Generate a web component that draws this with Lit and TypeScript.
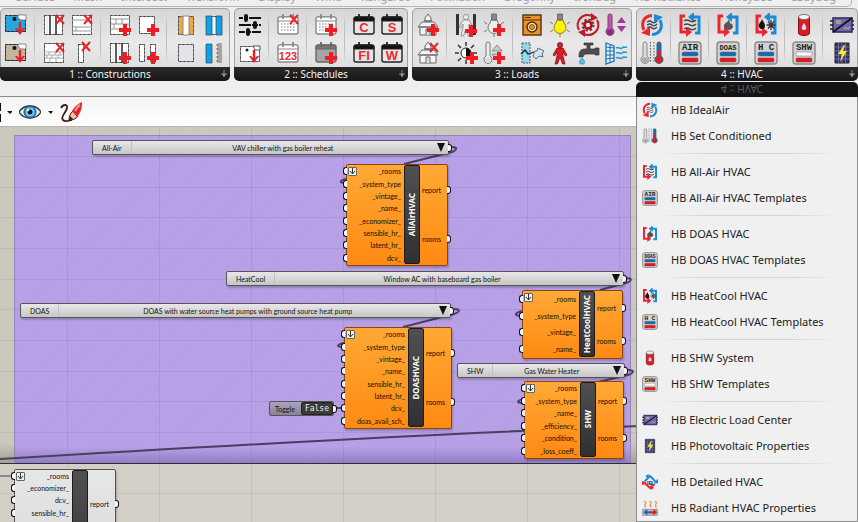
import { LitElement, html, svg, css } from "lit";
import { customElement, property } from "lit/decorators.js";
import { styleMap } from "lit/directives/style-map.js";

/* ---------- shared icon fragments (24 x 24 grid) ---------- */

const plus = (x = 17, y = 17) => svg`<path d="M${x - 6} ${y}h12M${x} ${y - 6}v12" stroke="#ee1c24" stroke-width="4" fill="none"/>`;
const cross = (x = 18, y = 6) => svg`<path d="M${x - 4} ${y - 4}l8 9M${x + 4} ${y - 4}l-8 9" stroke="#e8222b" stroke-width="2" fill="none"/>`;
const downArrow = (x = 16) => svg`<path d="M${x} 9v10" stroke="#ee1c24" stroke-width="2.400"/><path d="M${x - 5} 15h2l3 3 3-3h2l-5 7z" fill="#ee1c24"/>`;
const dashed = (x: number, y: number, w: number, h: number, fill = "#fff") =>
  svg`<rect x=${x + 0.5} y=${y + 0.5} width=${w - 1} height=${h - 1} fill=${fill} stroke="#8a8a8a"/><rect x=${x + 0.5} y=${y + 0.5} width=${w - 1} height=${h - 1} stroke="#444" stroke-dasharray="2 2"/>`;

const tag = (fill: string, top: number) => svg`
  <path d="M1.500 ${top + 0.5}h20v16h-20z" fill=${fill} stroke="#555"/>
  <path d="M1.500 ${top + 0.5}h20v16h-20z" stroke="#222" stroke-dasharray="2 2"/>
  <path d="M14 ${top}h8v5h-5l-3-2z" fill="#fff" stroke="#444" stroke-width=".6"/>
  <circle cx="10.500" cy=${top + 4} r="2" fill="#111"/>${downArrow()}`;

const layers = svg`${dashed(2, 2, 19, 20)}
  <path d="M8 2v20M14 2v20" stroke="#333" stroke-width="1.600"/><path d="M5 3v18M11 3v18" stroke="#ccc" stroke-width=".6"/>`;
const bricksTop = svg`${dashed(2, 2, 20, 20)}<path d="M2 6h20M2 11h20M8 6v5M6 11v4M2 16h9M14 6v5" stroke="#777" fill="none" stroke-width=".8"/>`;
const bricksLow = svg`${dashed(2, 2, 20, 20)}<path d="M2 11h20M2 14h20M2 17h20M7 11v3M13 11v3M18 11v3M5 14v3M10 14v3M16 14v3M8 17v4M14 17v4" stroke="#999" stroke-width=".8"/>`;

const calendar = (fill = "#fff", head = "#fff", line = "#888") => svg`
  <rect x="2" y="4" width="20" height="17" rx="2" fill=${fill} stroke=${line} stroke-width="1.400"/>
  <path d="M2 6a2 2 0 012-2h16a2 2 0 012 2v2H2z" fill=${head} stroke=${line}/>
  <path d="M7 1v5M17 1v5" stroke=${line} stroke-width="1.800"/>`;
const days = svg`<path d="M5 11h14M5 14h14M5 17h14" stroke="#aaa" stroke-width="1.400" stroke-dasharray="1.600 1.400"/>`;
const letterDay = (t: string) => svg`${calendar("#e6e6e6", "#111", "#222")}
  <text x="12" y="19" text-anchor="middle" font-family="Liberation Sans, sans-serif" font-weight="700" font-size="13" fill="#ee2a2a">${t}</text>`;

const house = svg`<path d="M9 5l3-4 3 4v3H9zM2 14l4-5h12l4 5zM4 14h16v8H4z" fill="#f4f4f4" stroke="#666"/><path d="M10 22v-6h4v6M8 8h8" fill="#ddd" stroke="#666"/>`;
const bulb = (fill: string, line: string) => svg`
  <path d="M9 7h6l1 3a6 6 0 11-8 0z" fill=${fill} stroke=${line}/>
  <path d="M9.500 1h5v6h-5z" fill="#888" stroke="#444" stroke-width=".6"/><path d="M2 9l3 2M22 9l-3 2M2 19l3-2M22 19l-3-2M12 21v3" stroke=${line}/>`;
const person = (fill: string, line: string) => svg`<circle cx="12" cy="4" r="2.600" fill=${fill} stroke=${line} stroke-width=".7"/>
  <path d="M9 7h6l4 7-1.500 1L15 11v4l2 8h-2.500L12 16l-2.500 7H7l2-8v-4l-2.500 4L5 14z" fill=${fill} stroke=${line} stroke-width=".7"/>`;
const thermo = (x: number, fill: string, bulbFill: string, line: string) => svg`
  <path d="M${x - 2} 3a2 2 0 014 0v12a4 4 0 11-4 0z" fill=${fill} stroke=${line}/>
  <circle cx=${x} cy="19" r="3" fill=${bulbFill}/>`;

const waves = svg`<path d="M6 8c3-2 4-1 6 0s4 1 6-1M6 12c3-2 4-1 6 0s4 1 6-1M6 16c3-2 4-1 6 0s4 1 6-1" stroke="#444" stroke-width="1.500" fill="none"/>`;
const loop = svg`
  <path d="M7 3H3v16h7" stroke="#ee2431" stroke-width="3" fill="none"/><path d="M8 14l6 5-6 5z" fill="#ee2431"/>
  <path d="M17 20h4V4h-7" stroke="#1c8ad6" stroke-width="3" fill="none"/><path d="M16 -1l-6 5 6 5z" fill="#1c8ad6"/>`;
const template = (t: string, upper = "#0f6db8", size = 7) => svg`
  <rect x="1" y="1" width="22" height="22" rx="3" fill="#d2d2d2" stroke="#8a8a8a" stroke-width="1.400"/>
  <text x="12" y="9" text-anchor="middle" font-family="Liberation Mono, monospace" font-weight="700" font-size=${size} fill="#222">${t}</text>
  <rect x="4" y="11" width="16" height="4" rx="1.500" fill=${upper} stroke="#666" stroke-width=".5"/>
  <rect x="4" y="17" width="16" height="4" rx="1" fill="#e01b24" stroke="#933" stroke-width=".5"/>`;
const cell = svg`<path d="M5 2h14v20H5z" fill="#33346e" stroke="#222"/><path d="M8.500 2v20M12 2v20M15.500 2v20M5 6h14M5 10h14M5 14h14M5 18h14" stroke="#8585b8" stroke-width=".7"/>`;

const icons: Record<string, unknown> = {
  matOpaque: tag("#2aa5e0", 2),
  matTan: tag("#c4b49c", 3),
  layersCut: svg`${layers}${cross()}`,
  bricksCut: svg`${bricksLow}${cross()}`,
  frameCut: svg`${dashed(2, 2, 20, 20)}<path d="M2 7h20M2 14h20M2 18h20M6 14v4" stroke="#999"/>${cross()}`,
  barCut: svg`${dashed(8, 3, 6, 19)}${cross(16, 5)}`,
  bricksAdd: svg`${bricksTop}${plus()}`,
  layersAdd: svg`${layers}${plus()}`,
  boxAdd: svg`${dashed(3, 3, 16, 18)}${plus()}`,
  gapAdd: svg`${dashed(3, 3, 6, 18)}${dashed(14, 3, 6, 18)}${plus()}`,
  opaque: svg`${dashed(4, 3, 16, 19, "#f2a73c")}<path d="M9 3h6v19H9z" fill="#fff" stroke="#888"/>`,
  blank: dashed(4, 3, 16, 18, "#e2e4e7"),
  glass: svg`${dashed(4, 3, 16, 19, "#eef7fc")}<path d="M4 3h6v19H4zM14 3h6v19h-6z" fill="#0ea1e4" stroke="#345" stroke-width=".7"/>`,
  shade: svg`<path d="M4 3h6v19H4z" fill="#0ea1e4" stroke="#345" stroke-width=".7"/><path d="M20 3h-4q-2 1 0 2h4M20 7h-4q-2 1 0 2h4M20 11h-4q-2 1 0 2h4M20 15h-4q-2 1 0 2h4M20 19h-4q-2 1 0 2h4" fill="none" stroke="#666" stroke-width="1.200"/>`,
  sliders: svg`<path d="M1 5h22M1 12h22M1 19h22" stroke="#111" stroke-width="2.200"/><path d="M8 3v4M17 10v4M10 17v4" stroke="#111" stroke-width="4" stroke-linecap="round"/><path d="M5 5h1M10 5h1M13 12h1M20 12h1M7 19h1M13 19h1" stroke="#ddd" stroke-width="2.200"/>`,
  pickSchedule: svg`${dashed(2, 5, 20, 16)}<circle cx="9" cy="9" r="1.500" fill="#222"/><path d="M15 5h7v4h-5z" fill="#fff" stroke="#555"/>${downArrow()}`,
  calCut: svg`${calendar()}${days}${cross()}`,
  cal123: svg`${calendar()}<text x="12" y="19" text-anchor="middle" font-family="Liberation Sans, sans-serif" font-weight="700" font-size="11" fill="#ee2a2a">123</text>`,
  calAdd: svg`${calendar()}${days}${plus()}`,
  calGray: svg`${calendar("#a4a4a4", "#777", "#666")}${days}${plus()}`,
  calC: letterDay("C"), calS: letterDay("S"), calFI: letterDay("FI"), calW: letterDay("W"),
  houseAdd: svg`${house}${plus()}`,
  houseCut: svg`${house}${cross()}`,
  occupancy: svg`<path d="M3.500 1v21M20.500 1v21" stroke="#333" stroke-width="3"/>${person("#eee", "#777")}${plus(17, 18)}`,
  bulbAdd: svg`${bulb("#eee", "#777")}${plus()}`,
  sunAdd: svg`<path d="M12 1v4M12 19v4M1 12h4M19 12h4M4 4l3 3M20 4l-3 3M4 20l3-3" stroke="#333" stroke-width="1.500"/><circle cx="12" cy="12" r="5" fill="#fff" stroke="#222"/><path d="M12 7a5 5 0 010 10z" fill="#111"/>${plus(18, 17)}`,
  thermoAdd: svg`${thermo(6, "#eee", "#ddd", "#777")}<path d="M10 10l5-6 5 6zM10 13h9l-5 6z" fill="#ccc" stroke="#888"/>${plus()}`,
  washer: svg`<rect x="3" y="2" width="18" height="20" fill="#f5921e" stroke="#4a3216" stroke-width="1.400"/><path d="M3 7h18M5 4.500h6" stroke="#4a3216"/><circle cx="12" cy="14" r="5" fill="#fbd9a8" stroke="#4a3216" stroke-width="1.500"/><circle cx="12" cy="14" r="2.500" fill="#f5921e" stroke="#4a3216" stroke-width=".7"/>`,
  bulbOn: bulb("#fff200", "#8c8418"),
  gear: svg`<path d="M3 17A10 10 0 0116 3M21 7A10 10 0 018 21" stroke="#bb1e2a" stroke-width="2.200"/><path d="M15 0l7 5-7 3zM9 24l-7-5 7-3z" fill="#bb1e2a"/><circle cx="12" cy="12" r="3.500" fill="#e6e6e6" stroke="#a31621" stroke-width="2.600"/><circle cx="12" cy="12" r="5.500" stroke="#a31621" stroke-width="2" stroke-dasharray="2.200 2.119"/>`,
  setpoint: svg`${thermo(6, "#c055b4", "#8e2a86", "#7a3a75")}<path d="M13 10l4.500-6L22 10zM13 13h9l-4.500 6z" fill="#a3369b"/>`,
  infiltration: svg`<rect x="2" y="2" width="8" height="20" fill="#93d8f2" stroke="#555" stroke-dasharray="2 1"/><path d="M1 13l4-4 3 4 6-2" fill="none" stroke="#222" stroke-width="1.300"/><path d="M13 15l2-5 2 0 1-3 6 3-2 3 1 3-4-1-3 3z" fill="#cbe9f5" stroke="#667"/>`,
  people: person("#e01b24", "#6d0c10"),
  faucet: svg`<path d="M8 2h9v2h-3v4h5v-1h4v7h-4v-1h-8c-3 0-3 1-4 3H3c0-5 1-8 6-8h2V4H8z" fill="#4d4d4d" stroke="#333" stroke-width=".7"/><path d="M6 17c3 3 3 4 2 6H4c-1-2-1-3 2-6z" fill="#58bdea" stroke="#2c7fa8" stroke-width=".6"/>`,
  ventilation: svg`<path d="M2 2l8 3v15l-8 3z" fill="#dff3fc" stroke="#1d6fae" stroke-width="1.300"/><path d="M2 6l8 1M2 10h8M2 14h8M2 18l8-1M6 4v18" stroke="#1d6fae"/><path d="M12 7c3-2 4 2 6 0s3 0 5-1M12 12c3-2 4 2 6 0s3 0 5-1M12 17c3-2 4 2 6 0s3 0 5-1" stroke="#259bd8" stroke-width="1.600" fill="none"/>`,
  ideal: svg`<path d="M7 9c3-2 4-1 5 0s3 1 5-1M7 12c3-2 4-1 5 0s3 1 5-1M7 15c3-2 4-1 5 0s3 1 5-1" stroke="#444" stroke-width="1.300"/><path d="M12 2.500C3 3 1 11 4 17" stroke="#ee2431" stroke-width="3" fill="none"/><path d="M1 20l9 3V14z" fill="#ee2431"/><path d="M12 21.500c9-.5 11-8.500 8-14.500" stroke="#1c8ad6" stroke-width="3" fill="none"/><path d="M23 4l-9-3v9z" fill="#1c8ad6"/>`,
  conditioned: svg`${thermo(5, "#ddd", "#aaa", "#888")}<path d="M10.500 1v21M14 1v21" stroke="#555" stroke-dasharray="1.500 1.500"/>${thermo(19, "#1c6fc0", "#e01b24", "#555")}<path d="M17.500 10h3v7h-3z" fill="#e01b24"/>`,
  allAir: svg`${loop}${waves}`,
  doas: svg`${loop}<path d="M13 6c-1 4-6 4-5 8 1 4 8 4 9 0 0-2-1-2-1-4-1 2-2 1-3-4z" fill="#555"/>`,
  heatCool: svg`${loop}<path d="M8 6c-1 4-4 4-3 8 1 3 6 3 6-1 0-3-2-4-3-7z" fill="#111"/><path d="M17 7v10M12.500 12h9M14 8.500l6 7M20 8.500l-6 7" stroke="#333" stroke-width="1.300"/>`,
  tAir: template("AIR", undefined, 9), tDoas: template("DOAS"), tHc: template("H C", undefined, 9), tShw: template("SHW", "#fff", 9),
  shw: svg`<path d="M6.500 4v16a5.500 2.500 0 0011 0V4z" fill="#e01b24" stroke="#7c1116"/><ellipse cx="12" cy="4" rx="5.500" ry="2.500" fill="#f4f4f4" stroke="#777"/><path d="M12 10c3 4 3 7 0 7s-3-3 0-7z" fill="#bfe6fa"/>`,
  electric: svg`<rect x="3" y="5" width="19" height="14" fill="#6e68b4" stroke="#33315c" stroke-width="1.600"/><path d="M3 19L22 5" stroke="#111" stroke-width="1.600"/><path d="M0 8h3M0 12h3M0 16h3M22 8h2M22 12h2M22 16h2" stroke="#222" stroke-width="1.600"/><path d="M6 8h5M6 10h5M14 16c2-4 3 2 6-2" stroke="#ddd05a" fill="none"/>`,
  solar: svg`${cell}<path d="M14 4l-6 9h4l-2 8 7-11h-4l2-6z" fill="#ffe92e"/>`,
  detailed: svg`<path d="M4 11l8-8 8 8" fill="none" stroke="#1c8ad6" stroke-width="3"/><path d="M24 7v7h-7zM10 0l-5 3 5 5z" fill="#1c8ad6"/><path d="M4 14l8 7 7-6" fill="none" stroke="#ee2431" stroke-width="3"/><path d="M0 17v-7l7 3zM13 24l5-3-5-5z" fill="#ee2431"/><text x="12" y="16" text-anchor="middle" font-family="Liberation Sans, sans-serif" font-weight="700" font-size="9" fill="#222">IB</text>`,
  radiant: svg`<path d="M3 2q4 1 2 4t1 5M11 2q4 1 2 4t1 5M19 2q4 1 2 4t1 5" stroke="#f08a4a" stroke-width="1.800" fill="none"/><path d="M1 14h22v9H1z" fill="#bbb" stroke="#777"/><path d="M7 18.500h6" stroke="#1668b8" stroke-width="3"/><path d="M8 14v9l-6-4.500z" fill="#1668b8"/><path d="M12 18.500h6" stroke="#e01b24" stroke-width="3"/><path d="M17 14v9l6-4.500z" fill="#e01b24"/>`,
};

@customElement("gh-icon")
class GhIcon extends LitElement {
  @property() name = "";
  static styles = css`
    :host { display: block; width: 24px; height: 24px; }
    svg { display: block; width: 100%; height: 100%; }
  `;
  render() { return html`<svg viewBox="0 0 24 24" fill="none" aria-hidden="true">${icons[this.name]}</svg>`; }
}

/* ---------- data ---------- */

type Pair = [string, string];
interface Panel { title: string; groups: Pair[][]; }

const panels: Panel[] = [
  { title: "1 :: Constructions", groups: [
    [["matOpaque", "matTan"]],
    [["layersCut", "bricksCut"], ["frameCut", "barCut"]],
    [["bricksAdd", "layersAdd"], ["boxAdd", "gapAdd"]],
    [["opaque", "blank"], ["glass", "shade"]] ] },
  { title: "2 :: Schedules", groups: [
    [["sliders", "pickSchedule"]], [["calCut", "cal123"]], [["calAdd", "calGray"]],
    [["calC", "calFI"], ["calS", "calW"]] ] },
  { title: "3 :: Loads", groups: [
    [["houseAdd", "houseCut"]],
    [["occupancy", "sunAdd"], ["bulbAdd", "thermoAdd"]],
    [["washer", "infiltration"], ["bulbOn", "people"], ["gear", "faucet"], ["setpoint", "ventilation"]] ] },
  { title: "4 :: HVAC", groups: [
    [["ideal", "conditioned"]], [["allAir", "tAir"]], [["doas", "tDoas"]],
    [["heatCool", "tHc"]], [["shw", "tShw"]], [["electric", "solar"]] ] },
];

const menu: Pair[][] = [
  [["ideal", "HB IdealAir"], ["conditioned", "HB Set Conditioned"]],
  [["allAir", "HB All-Air HVAC"], ["tAir", "HB All-Air HVAC Templates"]],
  [["doas", "HB DOAS HVAC"], ["tDoas", "HB DOAS HVAC Templates"]],
  [["heatCool", "HB HeatCool HVAC"], ["tHc", "HB HeatCool HVAC Templates"]],
  [["shw", "HB SHW System"], ["tShw", "HB SHW Templates"]],
  [["electric", "HB Electric Load Center"], ["solar", "HB Photovoltaic Properties"]],
  [["detailed", "HB Detailed HVAC"], ["radiant", "HB Radiant HVAC Properties"]],
];

const tabs = ["Surface", "Mesh", "Intersect", "Transform", "Display", "Wind", "Kangaroo", "Pollination", "Dragonfly", "Ironbug", "HB-Radiance", "Honeybee", "Ladybug"];

interface GraphNode { name: string; x: number; y: number; w: number; h: number; out: number; ins: string[]; outs: string[]; slots?: number; idle?: boolean; }
const nodes: GraphNode[] = [
  { name: "AllAirHVAC", x: 346, y: 37, w: 102, h: 102, out: 27, ins: ["_rooms", "_system_type", "_vintage_", "_name_", "_economizer_", "sensible_hr_", "latent_hr_", "dcv_"], outs: ["report", "rooms"] },
  { name: "HeatCoolHVAC", x: 522, y: 163, w: 101, h: 69, out: 27, ins: ["_rooms", "_system_type", "_vintage_", "_name_"], outs: ["report", "rooms"] },
  { name: "DOASHVAC", x: 344, y: 200, w: 108, h: 102, out: 27, ins: ["_rooms", "_system_type", "_vintage_", "_name_", "sensible_hr_", "latent_hr_", "dcv_", "doas_avail_sch_"], outs: ["report", "rooms"] },
  { name: "SHW", x: 524, y: 254, w: 100, h: 78, out: 27, ins: ["_rooms", "_system_type", "_name_", "_efficiency_", "_condition_", "_loss_coeff_"], outs: ["report", "rooms"] },
  { name: "", x: 14, y: 342, w: 102, h: 137, out: 27, ins: ["_rooms", "_economizer_", "dcv_", "sensible_hr_"], outs: ["report"], slots: 11, idle: true },
];

interface ValueList { id: string; label: string; value: string; x: number; y: number; w: number; }
const lists: ValueList[] = [
  { id: "air", label: "All-Air", value: "VAV chiller with gas boiler reheat", x: 92, y: 14, w: 357 },
  { id: "heat", label: "HeatCool", value: "Window AC with baseboard gas boiler", x: 226, y: 145, w: 398 },
  { id: "doas", label: "DOAS", value: "DOAS with water source heat pumps with ground source heat pump", x: 20, y: 177, w: 431 },
  { id: "shw", label: "SHW", value: "Gas Water Heater", x: 457, y: 237, w: 168 },
];

const at = (x: number, y: number, w?: number, h?: number) =>
  styleMap({ left: `${x}px`, top: `${y}px`, ...(w ? { width: `${w}px` } : {}), ...(h ? { height: `${h}px` } : {}) });

@customElement("app-root")
class AppRoot extends LitElement {
  static styles = css`
    :host { display: flex; flex-direction: column; height: 100vh; overflow: hidden; position: relative;
      background: #efefef; color: #222; font: 11px/14px "Noto Sans", sans-serif; }
    * { box-sizing: border-box; }
    button { all: unset; box-sizing: border-box; display: block; cursor: pointer; }

    .tabs { display: flex; justify-content: space-between; align-items: flex-end; flex: none; height: 7px; overflow: hidden;
      padding: 0 15px 2px 16px; margin-right: 6px; border-bottom: 1px solid #b5b5b5; border-right: 1px solid #b5b5b5; border-radius: 0 0 5px 0; }
    .tabs a { color: #a0a0a0; text-decoration: none; }

    .ribbon { display: flex; gap: 4px; flex: none; padding-top: 1px; }
    .panel { position: relative; flex: none; }
    .tools { display: flex; padding: 2px 1px 0; border: 1px solid #a2a2a2; border-bottom: 0; border-radius: 5px 5px 0 0;
      background: linear-gradient(#d6d6d6, #e9e9e9 60%, #dedede); }
    .group { display: flex; }
    .group + .group::before { content: ""; width: 1px; margin: 2px 5px 4px 4px;
      background: linear-gradient(transparent, #bdbdbd 30%, #bdbdbd 70%, transparent); }
    .tool { width: 28px; height: 28px; padding: 2px; }
    .foot { display: flex; align-items: center; justify-content: center; height: 14px; padding-right: 10px; position: relative;
      background: linear-gradient(#2b2b2b, #161616); border-radius: 0 0 5px 5px; color: #f2f2f2; font-size: 10px; }
    .foot h2 { margin: 0; font: inherit; }
    .more { position: absolute; right: 2px; top: 3px; width: 8px; height: 8px; }
    .more svg { display: block; }

    .menu { position: absolute; z-index: 5; top: 100%; left: 0; width: 100%; margin-top: 1px; background: #f0f0f0; }
    .echo { height: 15px; padding-right: 10px; overflow: hidden; background: #141414; color: #5c5c5c; text-align: center; font-size: 10px; border-radius: 5px 5px 0 0; }
    .echo span { display: block; transform: scaleY(-1); }
    .list { border: 1px solid #8d8d8d; border-top: 0; }
    .section + .section { padding-top: 10px; position: relative; }
    .section + .section::before { content: ""; position: absolute; top: 4px; left: 20px; right: 16px; height: 1px;
      background: linear-gradient(90deg, transparent, #d6d6d6 25%, #d6d6d6 75%, transparent); }
    .item { display: flex; align-items: center; gap: 13px; width: 100%; height: 26px; padding-left: 5px; }
    .item gh-icon { width: 16px; height: 16px; }

    .bar { display: flex; align-items: center; gap: 7px; flex: none; height: 31px; margin-top: 15px; padding-left: 0;
      border-top: 1px solid #8b8b8b; border-bottom: 1px solid #b8b5ac; background: linear-gradient(#f4f4f4, #fff); }
    .bar svg { display: block; }

    .canvas { position: relative; flex: 1; min-height: 0; overflow: hidden; font: 7px/8px "Lato", "Noto Sans", sans-serif;
      background-color: #d4cfc6; }
    .sheet { position: absolute; inset: 0 0 auto 0; height: 337px; border-bottom: 1px solid #333;
      background: linear-gradient(transparent 94%, #6a675f66), repeating-linear-gradient(135deg, #cecbc1 0 1px, #c9c6bc 1px 3px); }
    .cluster { position: absolute; top: 8px; left: 14px; width: 617px; height: 328px; border: 1px solid #9585bb; border-bottom: 0;
      background: linear-gradient(transparent 95%, #5b479966), repeating-linear-gradient(135deg, #b9a2e7 0 1px, #b69fe4 1px 3px); }
    .grid { position: absolute; inset: 0;
      background:
        linear-gradient(90deg, #00000012 1px, transparent 1px) 67px 0 / 92px 92px,
        linear-gradient(#00000010 1px, transparent 1px 31px, #00000010 31px 32px, transparent 32px 61px, #00000010 61px 62px, transparent 62px) 0 29px / 92px 92px; }
    .wires { position: absolute; top: 0; left: 0; }

    .node { position: absolute; display: grid; grid-template-columns: minmax(0, 1fr) 16px auto; padding: 0 0 1px; border: 1px solid #8f4214; border-radius: 2px;
      background: linear-gradient(#ffa935, #ff8a12); box-shadow: 1px 2px 2px #0003; color: #140c02; }
    .idle { border-color: #555; background: linear-gradient(#e6e6e6, #d6d6d6); color: #111; }
    .ports { display: grid; list-style: none; margin: 0; padding: 0; }
    .ports li { position: relative; display: flex; align-items: center; }
    .in li { justify-content: flex-end; padding-right: 3px; }
    .out li { padding-left: 2px; }
    .in li::before, .out li::after { content: ""; position: absolute; width: 3px; height: 6px; background: #f6f6f6; border: 1px solid #111; }
    .in li::before { left: -4px; border-right: 0; border-radius: 3px 0 0 3px; }
    .out li::after { right: -4px; border-left: 0; border-radius: 0 3px 3px 0; }
    .core { display: flex; align-items: center; justify-content: center; border: 1px solid #1c1c1c; border-radius: 2px;
      background: linear-gradient(#505050, #303030); color: #fff; font: 700 8px/12px "Noto Sans", sans-serif; }
    .core span { writing-mode: vertical-rl; rotate: 180deg; }
    .fetch { position: absolute; left: 1px; top: 2px; width: 9px; height: 9px; border: 1px solid #666; border-radius: 1px; background: #f0f0f0; }
    .fetch svg { display: block; }

    .value { position: absolute; display: flex; align-items: stretch; height: 15px; border: 1px solid #555; border-radius: 2px;
      background: linear-gradient(#e8e8e8, #c6c6c6); box-shadow: 1px 2px 2px #0003; color: #111; }
    .value label { display: flex; align-items: center; padding: 0 9px; border-right: 1px solid #c0c0c0; }
    .value select { appearance: none; flex: 1; min-width: 0; margin: 0; padding: 0 14px 0 0; border: 0; background: none; color: #111; font: inherit; text-align-last: center; }
    .value svg { position: absolute; right: 2px; top: 2px; pointer-events: none; }
    .value::after, .toggle::after { content: ""; position: absolute; right: -4px; top: 3px; width: 3px; height: 6px; background: #f6f6f6; border: 1px solid #111; border-left: 0; border-radius: 0 3px 3px 0; }

    .toggle { position: absolute; display: flex; align-items: center; justify-content: space-between; height: 15px; border: 1px solid #555; border-radius: 2px;
      background: linear-gradient(#aaa4bd, #86809a); color: #111; }
    .toggle span { padding-left: 5px; }
    .toggle button { height: 13px; padding: 0 3px; border: 1px solid #222; border-radius: 2px; background: #3b3b3b; color: #eee; font: 8px/10px "DejaVu Sans Mono", monospace; }
  `;

  private panel(p: Panel, last: boolean) {
    return html`<section class="panel">
      <div class="tools">${p.groups.map(g => html`<div class="group">${g.map(pair => html`<div>${pair.map(n =>
        html`<button class="tool" aria-label=${n}><gh-icon name=${n}></gh-icon></button>`)}</div>`)}</div>`)}</div>
      <div class="foot"><h2>${p.title}</h2>
        <button class="more" aria-label="More"><svg width="8" height="8"><path d="M4 0v7M1 4h6" stroke="#888"/><path d="M2 4h4l-2 3z" fill="#999"/></svg></button></div>
      ${last ? this.menu(p.title) : ""}
    </section>`;
  }

  private menu(title: string) {
    return html`<div class="menu">
      <div class="echo" aria-hidden="true"><span>${title}</span></div>
      <div class="list" role="menu">${menu.map(s => html`<div class="section">${s.map(([i, t]) =>
        html`<button class="item" role="menuitem"><gh-icon name=${i}></gh-icon>${t}</button>`)}</div>`)}</div>
    </div>`;
  }

  private node(n: GraphNode) {
    const rows = (count: number) => styleMap({ "grid-template-rows": `repeat(${count}, minmax(0, 1fr))` });
    return html`<article class="node ${n.idle ? "idle" : ""}" style=${at(n.x, n.y, n.w, n.h)}>
      <ul class="ports in" style=${rows(n.slots ?? n.ins.length)}>${n.ins.map(t => html`<li>${t}</li>`)}</ul>
      <div class="core"><span>${n.name}</span></div>
      <ul class="ports out" style=${styleMap({ "grid-template-rows": "repeat(2, minmax(0, 1fr))", width: `${n.out}px` })}>${n.outs.map(t => html`<li>${t}</li>`)}</ul>
      <button class="fetch" aria-label="Expand inputs"><svg width="7" height="7"><path d="M3.500 0v6M1 3l2.500 3L6 3" fill="none" stroke="#333"/></svg></button>
    </article>`;
  }

  private value(v: ValueList) {
    return html`<div class="value" style=${at(v.x, v.y - 1, v.w)}>
      <label for=${v.id}>${v.label}</label>
      <select id=${v.id}><option>${v.value}</option></select>
      <svg width="10" height="9"><path d="M1 0h8L5 9z" fill="#111"/></svg>
    </div>`;
  }

  render() {
    return html`
      <nav class="tabs">${tabs.map(t => html`<a href="#">${t}</a>`)}</nav>
      <div class="ribbon">${panels.map((p, i) => this.panel(p, i === panels.length - 1))}</div>
      <div class="bar">
        <svg width="12" height="24"><path d="M0 3h1v8H0zM0 14h1v8H0zM7 11h6l-3 3z" fill="#111"/></svg>
        <button aria-label="Preview"><svg width="22" height="18" viewBox="0 0 22 18">
          <path d="M0 9C5 1 17 1 22 9 17 17 5 17 0 9z" fill="#dff1fa" stroke="#333" stroke-width="1.400"/>
          <circle cx="11" cy="9" r="6" fill="#2f9fd8" stroke="#174f77"/><circle cx="11" cy="9" r="4" fill="#7fd0f2"/><circle cx="11" cy="9" r="2.500" fill="#111"/><circle cx="9" cy="7" r="1.200" fill="#fff"/></svg></button>
        <svg width="5" height="24"><path d="M0 11h5l-2 3z" fill="#111"/></svg>
        <button aria-label="Sketch"><svg width="24" height="24" viewBox="0 0 24 24">
          <path d="M1 8c2-4 7-4 6 0-1 5-7 9-4 12 2 2 6 1 9 0" fill="none" stroke="#4a1d14" stroke-width="1.800"/>
          <path d="M9 20c0-4 1-6 4-9l5 5c-2 3-5 4-9 4z" fill="#f6c39a" stroke="#4a1d14"/><path d="M12 11C15 6 18 4 22 2c0 6-1 10-5 15z" fill="#e3242b"/><path d="M15 11c1-2 3-5 5-6" stroke="#ff9a8c" stroke-width="2"/><path d="M9 21l4-2-3-3z" fill="#222"/></svg></button>
      </div>
      <main class="canvas">
        <div class="sheet"></div>
        <div class="cluster"></div>
        <div class="grid"></div>
        <svg class="wires" width="640" height="394" fill="none" stroke="#4a3e63" stroke-width="2">
          <path d="M0 332C200 320 430 307 640 299"/>
          <path d="M452 20c6 0 5 3 0 5L404 37M346 52c-7 2-7 4 0 4"/>
          <path d="M626 151c7 0 6 3 0 5L600 163M522 184c-8 2-8 5 0 5"/>
          <path d="M454 182c7 0 6 3 0 5L403 200M344 216c-8 2-8 4 0 4"/>
          <path d="M628 243c7 0 6 3 0 5L598 255M524 272c-8 2-8 4 0 4"/>
          <path d="M334 281h10"/><path d="M0 349h14" stroke-width="1"/>
        </svg>
        ${lists.map(v => this.value(v))}
        ${nodes.map(n => this.node(n))}
        <div class="toggle" style=${at(269, 274, 65)}><span id="tg">Toggle</span><button aria-labelledby="tg" aria-pressed="false">False</button></div>
      </main>`;
  }
}
